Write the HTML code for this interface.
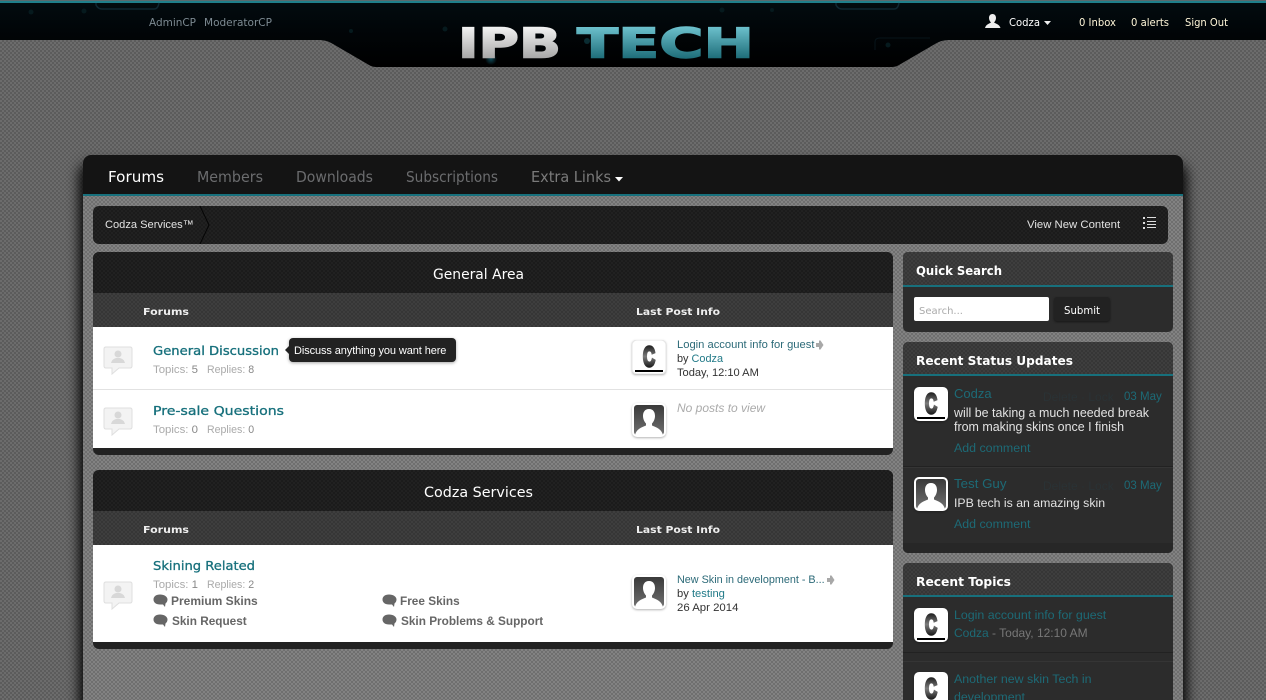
<!DOCTYPE html>
<html lang="en"><head><meta charset="utf-8"><title>IPB Tech</title>
<style>
html,body{margin:0;padding:0;width:1266px;height:700px;overflow:hidden}
body{position:relative;font-family:"Liberation Sans",Arial,sans-serif;font-size:12px;background:conic-gradient(#5c5c5c 25%,#6c6c6c 0 50%,#5c5c5c 0 75%,#6c6c6c 0) 0 0/4px 4px}
.a{position:absolute}
.t{position:absolute;white-space:nowrap;line-height:14px}
.wrap{left:83px;top:155px;width:1100px;height:600px;border-radius:8px 8px 0 0;box-shadow:0 12px 12px 4px rgba(0,0,0,.95);background:conic-gradient(#6f6f6f 25%,#828282 0 50%,#6f6f6f 0 75%,#828282 0 ) 0 0/4px 4px}
.nav{left:83px;top:155px;width:1100px;height:39px;background:#141414;border-bottom:2px solid #17707c;border-radius:8px 8px 0 0}
.tex{background:conic-gradient(#1b1b1b 25%,#212121 0 50%,#1b1b1b 0 75%,#212121 0) 0 0/4px 4px}
.tex2{background:conic-gradient(#363636 25%,#3e3e3e 0 50%,#363636 0 75%,#3e3e3e 0) 0 0/4px 4px}
.cat{left:93px;width:800px;background:#222;border-radius:6px}
.white{left:93px;width:800px;background:#fff}
.side{left:903px;width:270px;background:#2c2c2c;border-radius:5px}
.shead{left:903px;width:270px;border-radius:5px 5px 0 0;border-bottom:2px solid #17707c;box-sizing:border-box}
.av{position:absolute;filter:drop-shadow(0 1px 1px rgba(0,0,0,.3))}
.teal{color:#217a88}
.st{color:#1d6a76;font-size:12.400px}
.lt{color:#e2e2e2;font-size:12.450px}
.gr{color:#aaa}
.sub{font-weight:bold;color:#666;font-size:11.800px}
.n{font-size:11px;color:#aaa}
.n span{color:#888}
.lp{font-size:11.200px;color:#333}
.dl{color:#2a3235}
</style></head><body>

<svg class="a" style="left:0;top:0" width="1266" height="70" viewBox="0 0 1266 70">
<defs><linearGradient id="hd" x1="0" y1="0" x2="0" y2="1"><stop offset="0" stop-color="#020c10"/><stop offset=".45" stop-color="#010508"/><stop offset="1" stop-color="#000"/></linearGradient>
<radialGradient id="gl"><stop offset="0" stop-color="#0e4a58"/><stop offset="1" stop-color="#0e4a58" stop-opacity="0"/></radialGradient></defs>
<path d="M0 0H1266V40H950C944 40 940 41 935 44L899 65C896 67 893 67 890 67H378C375 67 372 67 369 65L333 44C328 41 324 40 318 40H0Z" fill="url(#hd)"/>
<rect y="0" width="1266" height="1" fill="#5a6a6e"/><rect y="1" width="1266" height="2" fill="#1f7f8b"/>
<path d="M96 3V5Q98 9 102 9H154Q158 9 159 3" fill="none" stroke="#0e2630" stroke-width="1.500"/>
<path d="M836 3V5Q838 9 842 9H894Q898 9 899 3" fill="none" stroke="#0e2630" stroke-width="1.500"/>
<path d="M875 50V42Q875 38 880 38H930" fill="none" stroke="#07141a" stroke-width="1"/>
<circle cx="31" cy="12" r="2.500" fill="#061a1e"/><circle cx="84" cy="11" r="2.500" fill="#061a1e"/><circle cx="491" cy="59" r="6" fill="url(#gl)"/>
<circle cx="445" cy="29" r="2.500" fill="#061a1e"/><circle cx="351" cy="31" r="2" fill="#061a1e"/><circle cx="587" cy="41" r="3" fill="#0a2c32"/>
<circle cx="722" cy="10" r="2.500" fill="#061a1e"/><circle cx="772" cy="10" r="2" fill="#061a1e"/><circle cx="888" cy="45" r="2.500" fill="#061a1e"/>
</svg>

<div class="a wrap"></div>
<div class="a nav"></div>

<!-- breadcrumb -->
<div class="a tex" style="left:93px;top:206px;width:1075px;height:38px;border-radius:6px"></div>
<svg class="a" style="left:199px;top:206px" width="14" height="38"><path d="M1 0L10 19L1 38" fill="none" stroke="#050505" stroke-width="1"/></svg>
<div class="t" style="left:105px;top:218px;font-size:11.100px;color:#e2e2e2">Codza Services™</div>
<div class="t" style="left:1027px;top:218px;font-size:11.350px;color:#e2e2e2">View New Content</div>
<svg class="a" style="left:1143px;top:217px" width="14" height="13"><g fill="#ddd"><rect x="0" y="0" width="2" height="2"/><rect x="0" y="5" width="2" height="2"/><rect x="0" y="10" width="2" height="2"/><rect x="4" y="0" width="9" height="1"/><rect x="4" y="4" width="9" height="1"/><rect x="4" y="7" width="9" height="1"/><rect x="4" y="10" width="9" height="1"/></g></svg>

<!-- category 1 -->
<div class="a cat" style="top:252px;height:203px"></div>
<div class="a tex" style="left:93px;top:252px;width:800px;height:41px;border-radius:6px 6px 0 0"></div>
<div class="a tex2" style="left:93px;top:293px;width:800px;height:34px"></div>
<div class="a white" style="top:327px;height:121px"></div>
<div class="a" style="left:93px;top:389px;width:800px;height:1px;background:#e2e2e2"></div>

<!-- category 2 -->
<div class="a cat" style="top:470px;height:179px"></div>
<div class="a tex" style="left:93px;top:470px;width:800px;height:41px;border-radius:6px 6px 0 0"></div>
<div class="a tex2" style="left:93px;top:511px;width:800px;height:34px"></div>
<div class="a white" style="top:545px;height:97px"></div>

<!-- forum icons -->
<svg width="0" height="0" style="position:absolute"><defs>
<symbol id="bub" viewBox="0 0 30 30"><path d="M3 1H27Q29 1 29 3V20Q29 22 27 22H16L9 28V22H3Q1 22 1 20V3Q1 1 3 1Z" fill="#f3f3f3" stroke="#dfdfdf"/><circle cx="15" cy="8" r="3.500" fill="#d8d8d8"/><path d="M8 17Q9 13 13 12H17Q21 13 22 17Z" fill="#d8d8d8"/></symbol>
<symbol id="usr" viewBox="0 0 34 34"><rect x="0" y="0" width="34" height="34" rx="5" fill="#fff"/><defs><linearGradient id="ug" x1="0" y1="0" x2="0" y2="1"><stop offset="0" stop-color="#3a3a3a"/><stop offset="1" stop-color="#707070"/></linearGradient></defs><rect x="2" y="2" width="30" height="30" rx="3" fill="url(#ug)"/><path d="M17 6C12.500 6 11 9.500 11 13C11 16 12.500 19 14 20.500V22.500C11 24 5 25 3 32H31C29 25 23 24 20 22.500V20.500C21.500 19 23 16 23 13C23 9.500 21.500 6 17 6Z" fill="#fff"/></symbol>
<symbol id="sb" viewBox="0 0 15 14"><path d="M7 0.500C3 0.500 0.500 2.500 0.500 5.500C0.500 8.500 3 10.500 7 10.500H10L12 13L12.500 9.500C13.800 8.500 14.500 7 14.500 5.500C14.500 2.500 11 0.500 7 0.500Z" fill="#666"/></symbol>
<symbol id="ar" viewBox="0 0 9 10"><path d="M4 0.500H5.500L8.500 5L5.500 9.500H4V7H1V3H4Z" fill="#a8a8a8"/></symbol>
<linearGradient id="cg" gradientUnits="userSpaceOnUse" x1="0" y1="5" x2="0" y2="28"><stop offset="0" stop-color="#1c1c1c"/><stop offset=".5" stop-color="#7c7c7c"/><stop offset="1" stop-color="#141414"/></linearGradient>
</defs></svg>
<svg class="a" style="left:103px;top:346px" width="30" height="30"><use href="#bub"/></svg>
<svg class="a" style="left:103px;top:407px" width="30" height="30"><use href="#bub"/></svg>
<svg class="a" style="left:103px;top:581px" width="30" height="30"><use href="#bub"/></svg>

<!-- row texts -->
<div class="t n" style="left:153px;top:363px;font-size:11.400px">Topics: <span>5</span></div>
<div class="t n" style="left:207px;top:363px;font-size:10.600px">Replies: <span>8</span></div>
<div class="t n" style="left:153px;top:423px;font-size:11.400px">Topics: <span>0</span></div>
<div class="t n" style="left:207px;top:423px;font-size:10.600px">Replies: <span>0</span></div>
<div class="t n" style="left:153px;top:578px;font-size:11.400px">Topics: <span>1</span></div>
<div class="t n" style="left:207px;top:578px;font-size:10.600px">Replies: <span>2</span></div>

<!-- tooltip -->
<div class="a" style="left:289px;top:338px;width:167px;height:24px;background:#222;border-radius:4px;box-shadow:0 1px 3px rgba(0,0,0,.35)"></div>
<div class="a" style="left:285px;top:346px;width:0;height:0;border:4px solid transparent;border-left:0;border-right-color:#222"></div>
<div class="t" style="left:294px;top:344px;color:#fff;font-size:11px;letter-spacing:-.1px">Discuss anything you want here</div>

<!-- last posts -->
<svg class="av" style="left:632px;top:340px" width="34" height="34" viewBox="0 0 34 34"><rect width="34" height="34" rx="5" fill="#fff" stroke="#e6e6e6"/><text x="11" y="26" font-family="'Liberation Sans',sans-serif" font-weight="bold" font-size="28" fill="url(#cg)" stroke="url(#cg)" stroke-width="3" textLength="12" lengthAdjust="spacingAndGlyphs">C</text><rect x="3" y="30" width="28" height="2" fill="#000"/></svg>
<svg class="av" style="left:632px;top:403px" width="34" height="34"><use href="#usr"/></svg>
<svg class="av" style="left:632px;top:575px" width="34" height="34"><use href="#usr"/></svg>

<div class="t lp" style="left:677px;top:338px;color:#2c6a78">Login account info for guest</div>
<svg class="a" style="left:815px;top:340px" width="9" height="10"><use href="#ar"/></svg>
<div class="t lp" style="left:677px;top:352px;font-size:10.900px">by <span class="teal">Codza</span></div>
<div class="t lp" style="left:677px;top:366px;font-size:11.100px">Today, 12:10 AM</div>
<div class="t" style="left:677px;top:401px;font-style:italic;color:#aaa">No posts to view</div>
<div class="t lp" style="left:677px;top:573px;font-size:10.800px;color:#2c6a78">New Skin in development - B...</div>
<svg class="a" style="left:826px;top:575px" width="9" height="10"><use href="#ar"/></svg>
<div class="t lp" style="left:677px;top:587px;font-size:11.200px">by <span class="teal">testing</span></div>
<div class="t lp" style="left:677px;top:601px;font-size:11.400px">26 Apr 2014</div>

<!-- subforums -->
<svg class="a" style="left:153px;top:594px" width="15" height="14"><use href="#sb"/></svg>
<div class="t sub" style="left:171px;top:594px;font-size:12px">Premium Skins</div>
<svg class="a" style="left:382px;top:594px" width="15" height="14"><use href="#sb"/></svg>
<div class="t sub" style="left:400px;top:594px">Free Skins</div>
<svg class="a" style="left:153px;top:614px" width="15" height="14"><use href="#sb"/></svg>
<div class="t sub" style="left:172px;top:614px">Skin Request</div>
<svg class="a" style="left:382px;top:614px" width="15" height="14"><use href="#sb"/></svg>
<div class="t sub" style="left:401px;top:614px">Skin Problems &amp; Support</div>

<!-- sidebar -->
<div class="a side" style="top:252px;height:80px"></div>
<div class="a shead tex2" style="top:252px;height:35px"></div>
<div class="a" style="left:914px;top:297px;width:135px;height:24px;background:#fff;border-radius:2px"></div>
<div class="a" style="left:1054px;top:297px;width:56px;height:24px;background:#222;border-radius:3px;box-shadow:0 1px 2px rgba(0,0,0,.5)"></div>

<div class="a side" style="top:342px;height:211px"></div>
<div class="a shead tex2" style="top:342px;height:34px"></div>
<div class="a" style="left:903px;top:466px;width:270px;height:1px;background:#222"></div>
<div class="a" style="left:903px;top:467px;width:270px;height:1px;background:#353535"></div>
<div class="a" style="left:903px;top:543px;width:270px;height:10px;background:#272727;border-radius:0 0 5px 5px"></div>

<div class="a side" style="top:563px;height:160px"></div>
<div class="a shead tex2" style="top:563px;height:34px"></div>
<div class="a" style="left:903px;top:652px;width:270px;height:1px;background:#222"></div>
<div class="a" style="left:903px;top:661px;width:270px;height:1px;background:#353535"></div>

<svg class="av" style="left:914px;top:387px" width="34" height="34" viewBox="0 0 34 34"><rect width="34" height="34" rx="5" fill="#fff"/><text x="11" y="26" font-family="'Liberation Sans',sans-serif" font-weight="bold" font-size="28" fill="url(#cg)" stroke="url(#cg)" stroke-width="3" textLength="12" lengthAdjust="spacingAndGlyphs">C</text><rect x="3" y="30" width="28" height="2" fill="#000"/></svg>
<div class="t st" style="left:954px;top:387px;font-size:13px">Codza</div>
<div class="t dl" style="left:1043px;top:390px">Delete · Lock</div>
<div class="t st" style="left:1124px;top:390px;font-size:11.500px">03 May</div>
<div class="t lt" style="left:954px;top:406px">will be taking a much needed break</div>
<div class="t lt" style="left:954px;top:420px">from making skins once I finish</div>
<div class="t st" style="left:954px;top:441px">Add comment</div>

<svg class="av" style="left:914px;top:477px" width="34" height="34"><use href="#usr"/></svg>
<div class="t st" style="left:954px;top:477px;font-size:13.300px">Test Guy</div>
<div class="t dl" style="left:1043px;top:479px">Delete · Lock</div>
<div class="t st" style="left:1124px;top:479px;font-size:11.500px">03 May</div>
<div class="t lt" style="left:954px;top:496px;font-size:12.300px">IPB tech is an amazing skin</div>
<div class="t st" style="left:954px;top:517px">Add comment</div>

<svg class="av" style="left:914px;top:608px" width="34" height="34" viewBox="0 0 34 34"><rect width="34" height="34" rx="5" fill="#fff"/><text x="11" y="26" font-family="'Liberation Sans',sans-serif" font-weight="bold" font-size="28" fill="url(#cg)" stroke="url(#cg)" stroke-width="3" textLength="12" lengthAdjust="spacingAndGlyphs">C</text><rect x="3" y="30" width="28" height="2" fill="#000"/></svg>
<div class="t st" style="left:954px;top:608px">Login account info for guest</div>
<div class="t st" style="left:954px;top:626px;font-size:12px">Codza <span style="color:#777">- Today, 12:10 AM</span></div>
<svg class="av" style="left:914px;top:672px" width="34" height="34" viewBox="0 0 34 34"><rect width="34" height="34" rx="5" fill="#fff"/><text x="11" y="26" font-family="'Liberation Sans',sans-serif" font-weight="bold" font-size="28" fill="url(#cg)" stroke="url(#cg)" stroke-width="3" textLength="12" lengthAdjust="spacingAndGlyphs">C</text><rect x="3" y="30" width="28" height="2" fill="#000"/></svg>
<div class="t st" style="left:954px;top:672px">Another new skin Tech in</div>
<div class="t st" style="left:954px;top:690px">development</div>

<!-- display text overlay -->
<svg class="a" style="left:0;top:0" width="1266" height="700" viewBox="0 0 1266 700" font-family="'DejaVu Sans',sans-serif">
<defs>
<linearGradient id="lw" gradientUnits="userSpaceOnUse" x1="0" y1="27" x2="0" y2="58"><stop offset="0" stop-color="#f2f2f2"/><stop offset="1" stop-color="#a8a8a8"/></linearGradient>
<linearGradient id="lt" gradientUnits="userSpaceOnUse" x1="0" y1="27" x2="0" y2="58"><stop offset="0" stop-color="#6cc0cc"/><stop offset="1" stop-color="#1f6e7a"/></linearGradient>
</defs>
<text x="458" y="57.500" font-weight="bold" font-size="41" fill="url(#lw)" stroke="url(#lw)" stroke-width="1.400" textLength="103" lengthAdjust="spacingAndGlyphs">IPB</text>
<text x="577" y="57.500" font-weight="bold" font-size="41" fill="url(#lt)" stroke="url(#lt)" stroke-width="1.400" textLength="177" lengthAdjust="spacingAndGlyphs">TECH</text>

<g font-size="11">
<text x="149" y="26" fill="#7d8a92" textLength="47" lengthAdjust="spacingAndGlyphs">AdminCP</text>
<text x="204" y="26" fill="#7d8a92" textLength="68" lengthAdjust="spacingAndGlyphs">ModeratorCP</text>
<text x="1009" y="26" fill="#fff" textLength="31" lengthAdjust="spacingAndGlyphs">Codza</text>
<text x="1079" y="26" fill="#fff6d8" textLength="37" lengthAdjust="spacingAndGlyphs">0 Inbox</text>
<text x="1131" y="26" fill="#fff6d8" textLength="38" lengthAdjust="spacingAndGlyphs">0 alerts</text>
<text x="1185" y="26" fill="#fff6d8" textLength="43" lengthAdjust="spacingAndGlyphs">Sign Out</text>
</g>
<path d="M1044 21H1051L1047.500 25Z" fill="#eee"/>
<path d="M992.500 14C990 14 989 16 989 18C989 20 990 21.500 991 22.500C988.500 24 986 24.500 985 28H1000.500C999.500 24.500 996.500 24 994 22.500C995 21.500 996 20 996 18C996 16 995 14 992.500 14Z" fill="#eee"/>

<g font-size="15">
<text x="108" y="182" fill="#fff" textLength="56" lengthAdjust="spacingAndGlyphs">Forums</text>
<text x="197" y="182" fill="#6b6c6e" textLength="66" lengthAdjust="spacingAndGlyphs">Members</text>
<text x="296" y="182" fill="#6b6c6e" textLength="77" lengthAdjust="spacingAndGlyphs">Downloads</text>
<text x="406" y="182" fill="#6b6c6e" textLength="92" lengthAdjust="spacingAndGlyphs">Subscriptions</text>
<text x="531" y="182" fill="#7a7a7a" textLength="80" lengthAdjust="spacingAndGlyphs">Extra Links</text>
</g>
<path d="M615 177H623L619 181.500Z" fill="#fff"/>

<g font-size="14" fill="#fff">
<text x="433" y="279" textLength="91" lengthAdjust="spacingAndGlyphs">General Area</text>
<text x="424" y="497" textLength="109" lengthAdjust="spacingAndGlyphs">Codza Services</text>
</g>
<g font-size="10" font-weight="bold" fill="#eee">
<text x="143" y="315" textLength="46" lengthAdjust="spacingAndGlyphs">Forums</text>
<text x="636" y="315" textLength="84" lengthAdjust="spacingAndGlyphs">Last Post Info</text>
<text x="143" y="533" textLength="46" lengthAdjust="spacingAndGlyphs">Forums</text>
<text x="636" y="533" textLength="84" lengthAdjust="spacingAndGlyphs">Last Post Info</text>
</g>
<g font-size="12" fill="#17707c" stroke="#17707c" stroke-width=".3">
<text x="153" y="355" textLength="126" lengthAdjust="spacingAndGlyphs">General Discussion</text>
<text x="153" y="415" textLength="131" lengthAdjust="spacingAndGlyphs">Pre-sale Questions</text>
<text x="153" y="570" textLength="102" lengthAdjust="spacingAndGlyphs">Skining Related</text>
</g>
<g font-size="12" font-weight="bold" fill="#fff">
<text x="916" y="275" textLength="86" lengthAdjust="spacingAndGlyphs">Quick Search</text>
<text x="916" y="365" textLength="157" lengthAdjust="spacingAndGlyphs">Recent Status Updates</text>
<text x="916" y="586" textLength="95" lengthAdjust="spacingAndGlyphs">Recent Topics</text>
</g>
<text x="919" y="314" font-size="10" fill="#aaa" textLength="44" lengthAdjust="spacingAndGlyphs">Search...</text>
<text x="1064" y="314" font-size="10.500" fill="#fff" textLength="36" lengthAdjust="spacingAndGlyphs">Submit</text>
</svg>
</body></html>
